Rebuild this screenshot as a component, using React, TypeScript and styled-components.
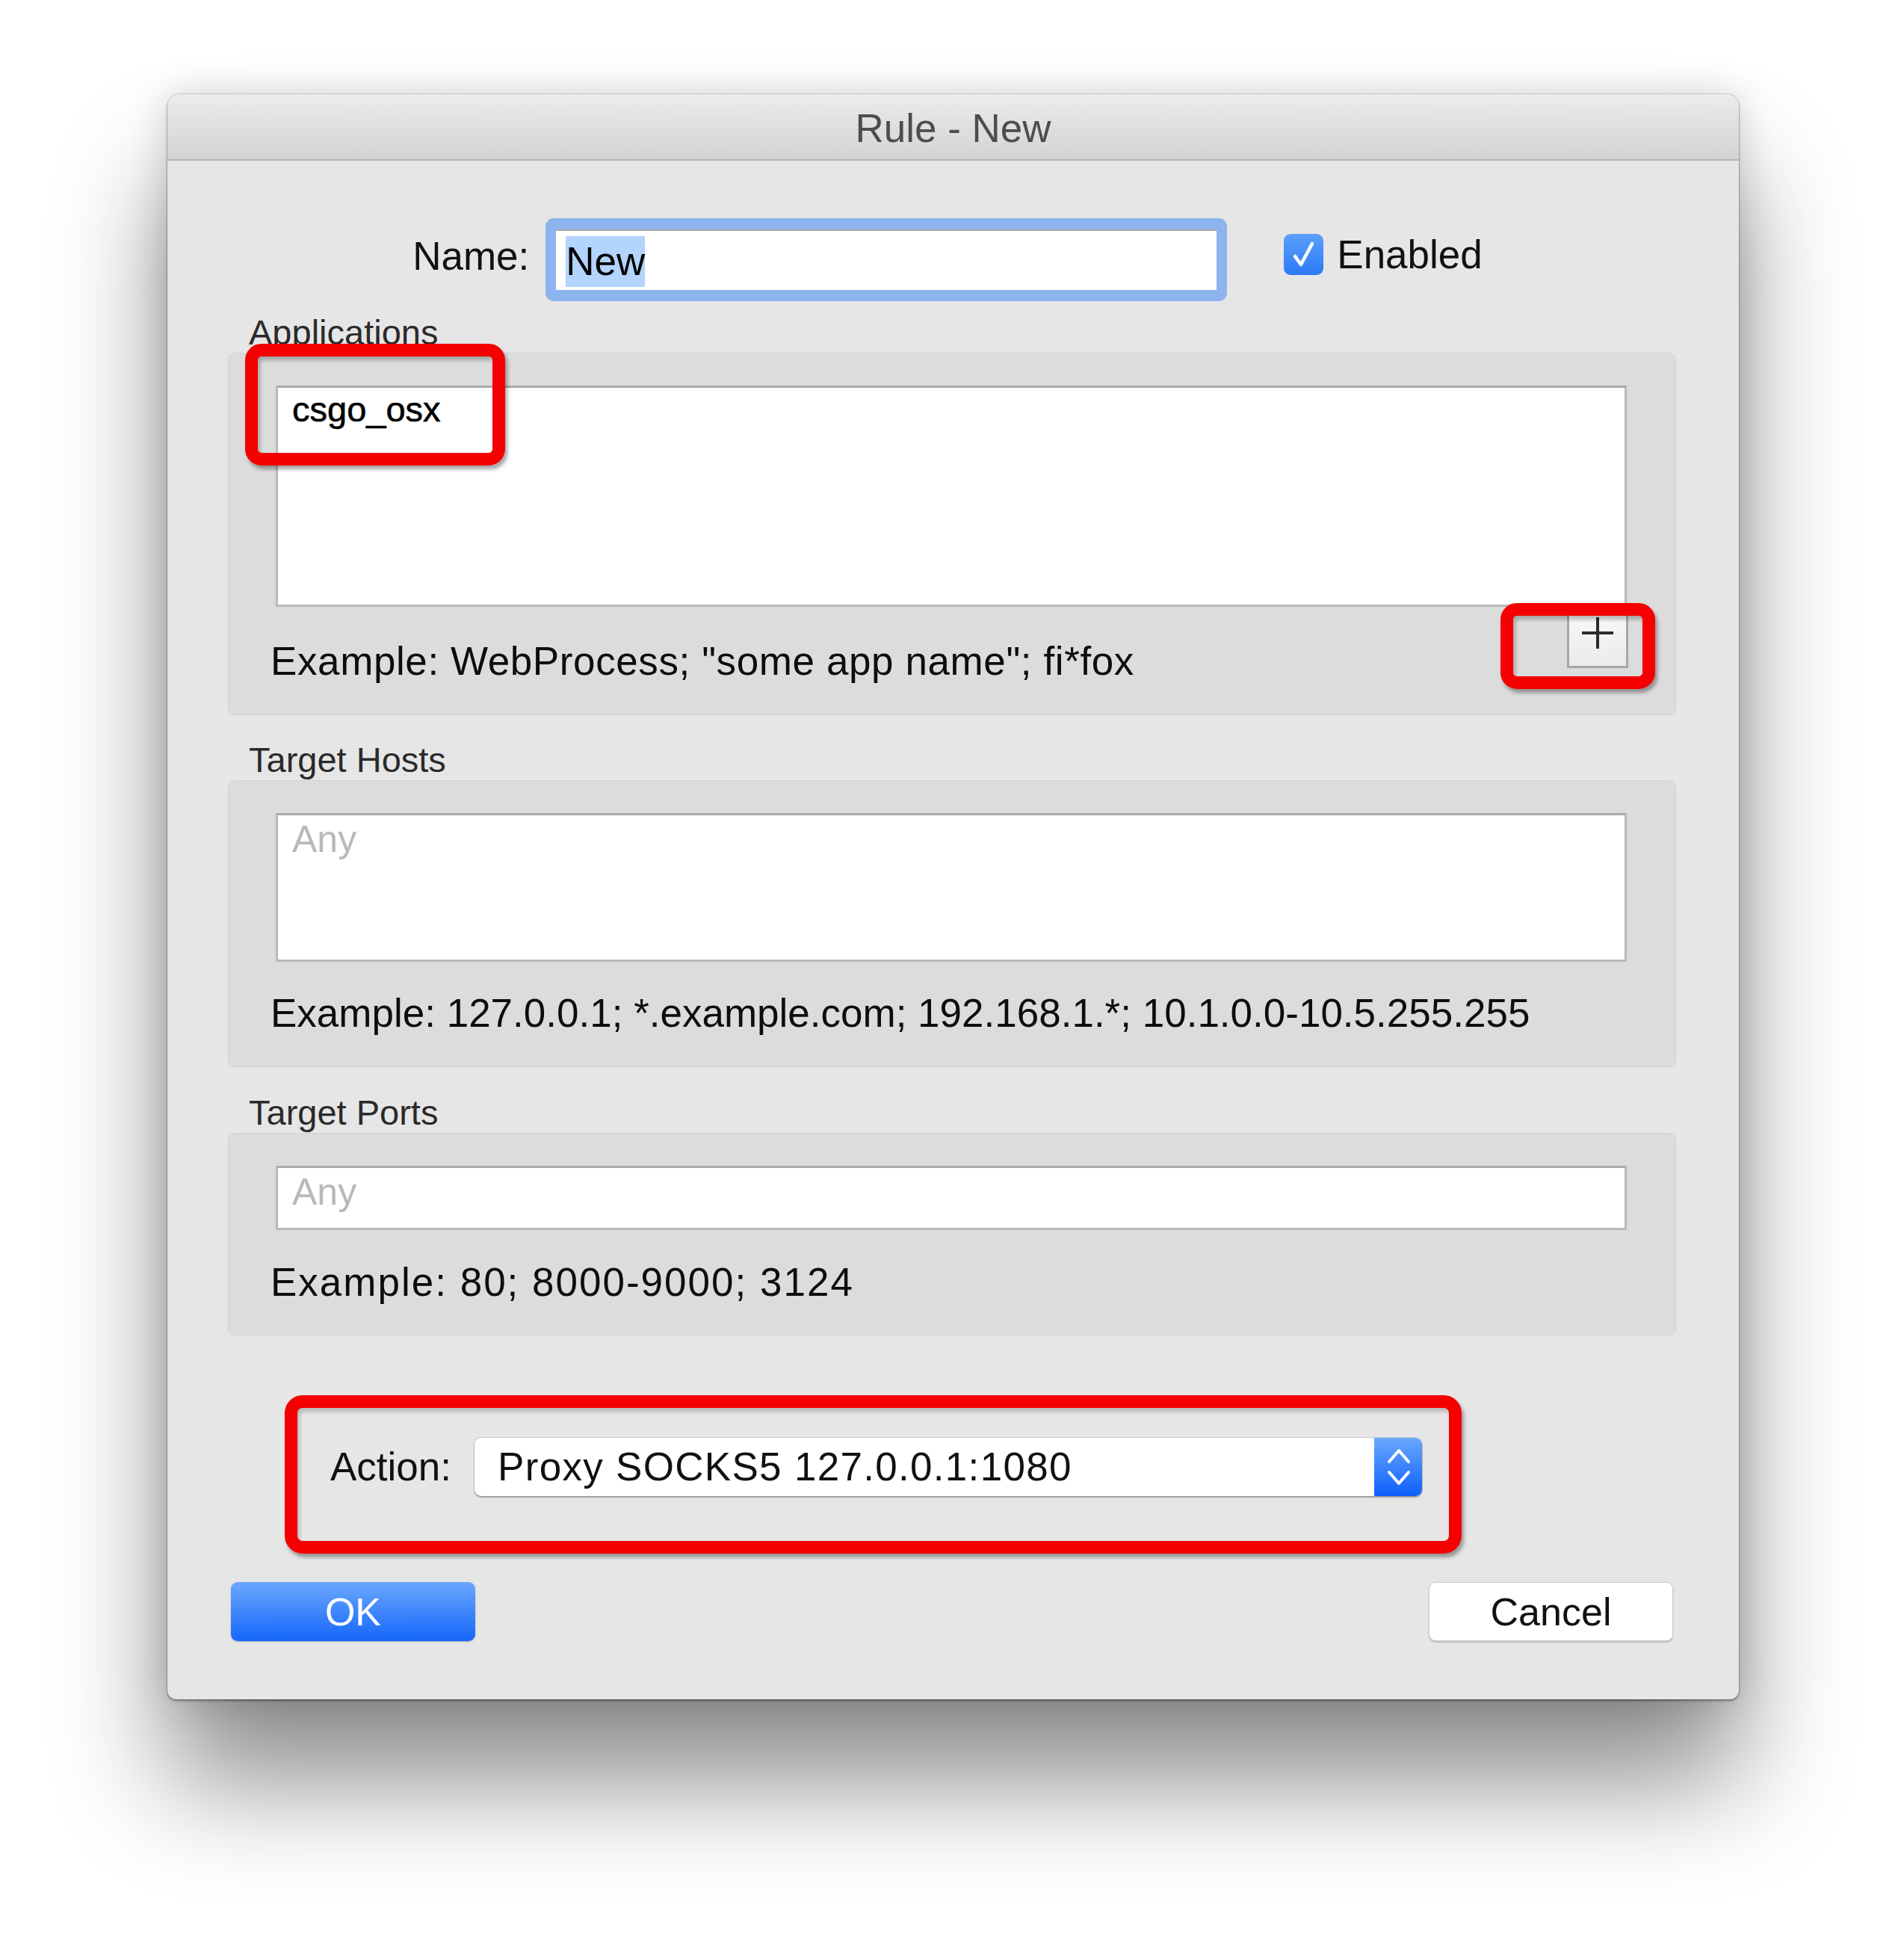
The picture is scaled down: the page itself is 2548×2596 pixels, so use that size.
import React from "react";
import styled, { createGlobalStyle } from "styled-components";

const GlobalStyle = createGlobalStyle`
  html, body {
    margin: 0;
    padding: 0;
    background: #ffffff;
    overflow: hidden;
  }
  body {
    font-family: "Liberation Sans", Arial, Helvetica, sans-serif;
    color: #111;
  }
`;

export default function App() {
  return (
    <Page>
      <GlobalStyle />
      <Window>
        <TitleBar>Rule - New</TitleBar>

        <Body>
          <NameRow>
            <RowLabel>Name:</RowLabel>
            <FocusRing>
              <NameInput>
                <Selection>New</Selection>
              </NameInput>
            </FocusRing>
            <CheckBox>
              <svg width="53" height="55" viewBox="0 0 53 55">
                <polyline
                  points="15,30 23,41 38,13"
                  fill="none"
                  stroke="#fff"
                  strokeWidth="4.5"
                  strokeLinecap="round"
                  strokeLinejoin="round"
                />
              </svg>
            </CheckBox>
            <CheckLabel>Enabled</CheckLabel>
          </NameRow>

          <SectionLabel $gap={18}>Applications</SectionLabel>
          <Group>
            <AppsMark />
            <Field $height={296}>
              <ListItem>csgo_osx</ListItem>
            </Field>
            <FooterRow>
              <Hint $tracking={0.6} $top={46}>
                Example: WebProcess; "some app name"; fi*fox
              </Hint>
              <PlusButton>
                <svg width="46" height="46" viewBox="0 0 46 46">
                  <path d="M23 2 V44 M2 23 H44" stroke="#2b2b2b" strokeWidth="4" />
                </svg>
                <PlusMark />
              </PlusButton>
            </FooterRow>
          </Group>

          <SectionLabel $gap={36}>Target Hosts</SectionLabel>
          <Group>
            <Field $height={199}>
              <Placeholder>Any</Placeholder>
            </Field>
            <FooterRow>
              <Hint $tracking={0} $top={42}>
                Example: 127.0.0.1; *.example.com; 192.168.1.*; 10.1.0.0-10.5.255.255
              </Hint>
            </FooterRow>
          </Group>

          <SectionLabel $gap={37}>Target Ports</SectionLabel>
          <Group>
            <Field $height={86}>
              <Placeholder>Any</Placeholder>
            </Field>
            <FooterRow>
              <Hint $tracking={2} $top={43}>
                Example: 80; 8000-9000; 3124
              </Hint>
            </FooterRow>
          </Group>

          <ActionFrame>
            <ActionLabel>Action:</ActionLabel>
            <Popup>
              <PopupText>Proxy SOCKS5 127.0.0.1:1080</PopupText>
              <Stepper>
                <svg width="64" height="78" viewBox="0 0 64 78">
                  <polyline
                    points="20,32 33,17 46,32"
                    fill="none"
                    stroke="#fff"
                    strokeWidth="4"
                    strokeLinecap="round"
                    strokeLinejoin="round"
                  />
                  <polyline
                    points="20,46 33,61 46,46"
                    fill="none"
                    stroke="#fff"
                    strokeWidth="4"
                    strokeLinecap="round"
                    strokeLinejoin="round"
                  />
                </svg>
              </Stepper>
            </Popup>
          </ActionFrame>

          <ButtonRow>
            <OkButton>OK</OkButton>
            <CancelButton>Cancel</CancelButton>
          </ButtonRow>
        </Body>
      </Window>
    </Page>
  );
}

// page + window
const Page = styled.div`
  width: 2548px;
  height: 2596px;
  padding-top: 126px;
  box-sizing: border-box;
`;

const Window = styled.div`
  width: 2103px;
  margin-left: 224px;
  background: #e6e6e6;
  border-radius: 16px 16px 12px 12px;
  box-shadow: 0 110px 150px rgba(0, 0, 0, 0.45), 0 0 50px rgba(0, 0, 0, 0.16),
    0 0 0 1px rgba(0, 0, 0, 0.14), 0 2px 3px rgba(0, 0, 0, 0.35);
  overflow: hidden;
`;

const TitleBar = styled.div`
  height: 89px;
  box-sizing: border-box;
  padding-top: 4px;
  display: flex;
  align-items: center;
  justify-content: center;
  background: linear-gradient(#ececec, #d3d3d3);
  border-bottom: 2px solid #b5b5b5;
  font-size: 53px;
  color: #4d4d4d;
`;

const Body = styled.div`
  padding: 77px 84px 78px 81px;
  display: flex;
  flex-direction: column;
`;

// name row
const NameRow = styled.div`
  height: 111px;
  padding-right: 12px;
  display: flex;
  align-items: center;
  justify-content: center;
`;

const RowLabel = styled.span`
  font-size: 53px;
  color: #111;
  margin-right: 22px;
  margin-bottom: 10px;
`;

const FocusRing = styled.div`
  padding: 15px 14px;
  background: #8cb4ee;
  border-radius: 11px;
`;

const NameInput = styled.div`
  width: 884px;
  height: 81px;
  box-sizing: border-box;
  background: #fff;
  border-top: 2px solid #a9a9a9;
  padding: 7px 0 0 13px;
  display: flex;
  align-items: flex-start;
`;

const Selection = styled.span`
  background: #b2d4fd;
  font-size: 53px;
  line-height: 68px;
  color: #000;
`;

const CheckBox = styled.div`
  width: 53px;
  height: 55px;
  margin-left: 76px;
  margin-bottom: 15px;
  border-radius: 9px;
  background: linear-gradient(#5ba0fc, #2c79f6);
  display: flex;
`;

const CheckLabel = styled.span`
  font-size: 53px;
  color: #111;
  margin-left: 18px;
  margin-bottom: 14px;
`;

// sections
const SectionLabel = styled.div<{ $gap: number }>`
  font-size: 47px;
  line-height: 47px;
  color: #2a2a2a;
  margin: ${(p) => p.$gap}px 0 4px 28px;
`;

const Group = styled.div`
  position: relative;
  background: #dcdcdc;
  border: 1px solid #d2d2d2;
  border-radius: 10px;
  padding: 43px 65px 45px 63px;
`;

const Field = styled.div<{ $height: number }>`
  height: ${(p) => p.$height}px;
  box-sizing: border-box;
  background: #fff;
  border: 3px solid #bababa;
  border-top-color: #aaaaaa;
  padding: 4px 19px;
`;

const Placeholder = styled.div`
  font-size: 50px;
  line-height: 56px;
  color: #b9b9b9;
`;

const ListItem = styled.div`
  font-size: 47px;
  line-height: 50px;
  color: #000;
  -webkit-text-stroke: 0.6px #000;
`;

const FooterRow = styled.div`
  display: flex;
  justify-content: space-between;
  align-items: flex-start;
`;

const Hint = styled.div<{ $tracking: number; $top: number }>`
  font-size: 53px;
  line-height: 53px;
  letter-spacing: ${(p) => p.$tracking}px;
  margin-top: ${(p) => p.$top}px;
  margin-left: -7px;
  color: #0d0d0d;
  white-space: nowrap;
`;

const PlusButton = styled.div`
  position: relative;
  width: 82px;
  height: 82px;
  margin-right: -2px;
  box-sizing: border-box;
  border: 3px solid #a7a7a7;
  border-top: none;
  background: linear-gradient(#f9f9f9, #ebebeb);
  display: flex;
  align-items: center;
  justify-content: center;
  svg {
    margin-bottom: 10px;
  }
`;

// red annotation marks laid over the dialog
const Mark = styled.div`
  position: absolute;
  box-sizing: border-box;
  border: 17px solid #f40000;
  border-radius: 22px;
  box-shadow: 3px 5px 5px rgba(0, 0, 0, 0.35), inset 3px 5px 5px rgba(0, 0, 0, 0.25);
  pointer-events: none;
  z-index: 2;
`;

const AppsMark = styled(Mark)`
  left: 22px;
  top: -13px;
  width: 348px;
  height: 163px;
`;

const PlusMark = styled(Mark)`
  left: -92px;
  top: -5px;
  width: 207px;
  height: 115px;
`;

// action row
const ActionFrame = styled.div`
  margin: 79px 0 0 76px;
  width: 1575px;
  height: 212px;
  box-sizing: border-box;
  border: 17px solid #f40000;
  border-radius: 24px;
  box-shadow: 3px 5px 5px rgba(0, 0, 0, 0.35), inset 3px 5px 5px rgba(0, 0, 0, 0.2);
  padding: 40px 35px 0 44px;
  display: flex;
  align-items: flex-start;
`;

const ActionLabel = styled.span`
  font-size: 53px;
  line-height: 78px;
  color: #111;
  margin-right: 31px;
`;

const Popup = styled.div`
  width: 1268px;
  height: 78px;
  display: flex;
  background: #fff;
  border-radius: 9px;
  box-shadow: 0 0 0 1px rgba(0, 0, 0, 0.12), 0 2px 2px rgba(0, 0, 0, 0.28);
`;

const PopupText = styled.div`
  flex: 1;
  padding-left: 31px;
  font-size: 53px;
  line-height: 78px;
  letter-spacing: 1.3px;
  color: #111;
`;

const Stepper = styled.div`
  width: 64px;
  border-radius: 0 9px 9px 0;
  background: linear-gradient(#6aa8fd, #0d5ffb);
  display: flex;
`;

// buttons
const ButtonRow = styled.div`
  margin-top: 38px;
  padding: 0 4px;
  display: flex;
  justify-content: space-between;
`;

const BaseButton = styled.button`
  width: 327px;
  height: 79px;
  border-radius: 9px;
  font-family: inherit;
  font-size: 52px;
  padding: 0;
  cursor: pointer;
`;

const OkButton = styled(BaseButton)`
  border: none;
  color: #fff;
  background: linear-gradient(#6aa7fd, #1566fb);
  box-shadow: 0 1px 2px rgba(0, 0, 0, 0.25);
`;

const CancelButton = styled(BaseButton)`
  border: 1px solid #cbcbcb;
  color: #111;
  background: #fff;
  box-shadow: 0 2px 2px rgba(0, 0, 0, 0.18);
`;
